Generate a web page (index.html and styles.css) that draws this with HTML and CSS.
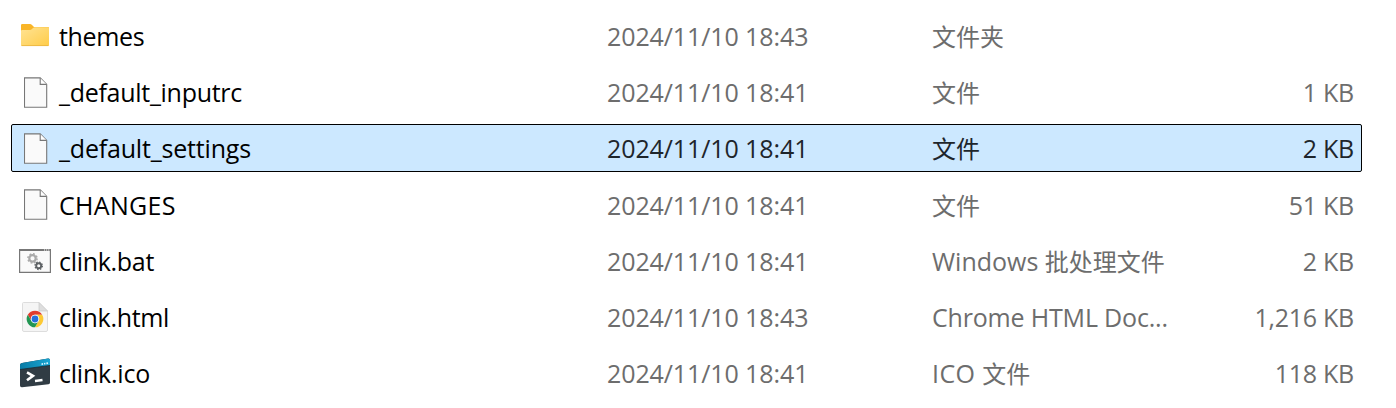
FILE: index.html
```html
<!DOCTYPE html>
<html lang="zh-CN">
<head>
<meta charset="utf-8">
<title>clink</title>
<link rel="stylesheet" href="styles.css">
</head>
<body>
<svg class="defs" width="0" height="0">
  <symbol id="file" viewBox="0 0 24 32">
    <path d="M.5 .9H16.2L22.7 7.4V30.2H.5Z" fill="#fafafa" stroke="#777" stroke-width="1.1"/>
    <path d="M16.2 .9V7.4H22.7" fill="#fff" stroke="#777" stroke-width="1.1"/>
  </symbol>
  <linearGradient id="folder" x1="0" y1="0" x2="1" y2="1"><stop offset="0" stop-color="#ffe394"/><stop offset="1" stop-color="#ffcc48"/></linearGradient>
  <linearGradient id="bar" x1="0" y1="0" x2="1" y2="0"><stop offset="0" stop-color="#087ba5"/><stop offset="1" stop-color="#1aa6d3"/></linearGradient>
</svg>
<main class="list">
  <div class="row">
    <div class="icon"><svg width="28" height="23" viewBox="0 0 28 23"><path d="M0 1.2Q0 0 1.2 0H9Q10 0 11 1L13 3H27Q28 3 28 4V12H0Z" fill="#f9b527"/><path d="M0 7Q0 6 1 6H9Q10 6 11 5L12 4Q13 3.2 14 3.2H27Q28 3.2 28 4.2V21Q28 22 27 22H1Q0 22 0 21Z" fill="url(#folder)"/><path d="M.5 21.6H27.5" fill="none" stroke="#e8b33e" stroke-width=".8"/></svg></div>
    <div class="name n-themes">themes</div><div class="date">2024/11/10 18:43</div><div class="type"><span class="cjk">文件夹</span></div><div class="size"></div>
  </div>
  <div class="row">
    <div class="icon icon-file"><svg width="24" height="32"><use href="#file"/></svg></div>
    <div class="name n-inputrc">_default_inputrc</div><div class="date">2024/11/10 18:41</div><div class="type"><span class="cjk">文件</span></div><div class="size">1 KB</div>
  </div>
  <div class="row selected">
    <div class="icon icon-file"><svg width="24" height="32"><use href="#file"/></svg></div>
    <div class="name n-settings">_default_settings</div><div class="date">2024/11/10 18:41</div><div class="type"><span class="cjk">文件</span></div><div class="size">2 KB</div>
  </div>
  <div class="row low">
    <div class="icon icon-file"><svg width="24" height="32"><use href="#file"/></svg></div>
    <div class="name n-changes">CHANGES</div><div class="date">2024/11/10 18:41</div><div class="type"><span class="cjk">文件</span></div><div class="size">51 KB</div>
  </div>
  <div class="row low">
    <div class="icon icon-bat"><svg width="32" height="24" viewBox="0 0 32 24"><path d="M.6 .6H31.4V23.4H.6Z" fill="#fafafa" stroke="#777" stroke-width="1.2"/><path d="M0 1H32" stroke="#777" stroke-width="2"/><path d="M25 1H30.5" stroke="#fff" stroke-width="1" stroke-dasharray="1.1 1"/><circle cx="13.5" cy="9.4" r="3.2" fill="none" stroke="#aaa" stroke-width="2.2"/><circle cx="13.5" cy="9.4" r="4.6" fill="none" stroke="#aaa" stroke-width="1.5" stroke-dasharray="1.8 1.81"/><circle cx="19.7" cy="16.8" r="2.5" fill="none" stroke="#5e6265" stroke-width="1.9"/><circle cx="19.7" cy="16.8" r="3.7" fill="none" stroke="#5e6265" stroke-width="1.3" stroke-dasharray="1.45 1.45"/></svg></div>
    <div class="name n-bat">clink.bat</div><div class="date">2024/11/10 18:41</div><div class="type t-bat">Windows <span class="cjk">批处理文件</span></div><div class="size">2 KB</div>
  </div>
  <div class="row">
    <div class="icon"><svg width="26" height="30" viewBox="0 0 26 30"><path d="M1.5 .5H17L25.5 9V28Q25.5 29.5 24 29.5H2Q.5 29.5 .5 28V1.5Q.5 .5 1.5 .5Z" fill="#f5f5f5" stroke="#ddd"/><path d="M17 .5V9H25.5Z" fill="#dedede" stroke="#c8c8c8" stroke-width=".7"/><g transform="translate(13 17)"><circle r="8.3" fill="#fff"/><path d="M-7.19-4.15A8.3 8.3 0 0 1 7.19-4.15L0-4.15A4.15 4.15 0 0 0-3.6 2.08Z" fill="#e33b2e"/><path d="M7.19-4.15A8.3 8.3 0 0 1 0 8.3L3.6 2.08A4.15 4.15 0 0 0 0-4.15Z" fill="#fcc934"/><path d="M0 8.3A8.3 8.3 0 0 1-7.19-4.15L-3.6 2.08A4.15 4.15 0 0 0 3.6 2.08Z" fill="#229653"/><circle r="4.2" fill="#fff"/><circle r="3.4" fill="#286fdb"/></g></svg></div>
    <div class="name n-html">clink.html</div><div class="date">2024/11/10 18:43</div><div class="type t-html">Chrome HTML Doc...</div><div class="size">1,216 KB</div>
  </div>
  <div class="row">
    <div class="icon"><svg width="30" height="30" viewBox="0 0 30 30"><path d="M2 5.1L28 .5Q30 .2 30 2V24.5Q30 26 28.5 26.3L2 29.3Q0 29.5 0 27.5V7Q0 5.4 2 5.1Z" fill="#303c44"/><path d="M2 5.1L28 .5Q30 .2 30 2V7.4L0 11.5V7Q0 5.4 2 5.1Z" fill="url(#bar)"/><path d="M0 11.5L30 7.4" stroke="#182229" stroke-width=".7"/><path d="M21.5 6.2L23 5.9M24 5.8L25.4 5.5M26.4 5.4L28 5.1" stroke="#d9f5ff" stroke-width="1.6"/><path d="M7 14.3L13 17.8L7 22.3" fill="none" stroke="#fff" stroke-width="2.6"/><path d="M15 22.9L22.5 22" stroke="#fff" stroke-width="2.5"/></svg></div>
    <div class="name n-ico">clink.ico</div><div class="date">2024/11/10 18:41</div><div class="type t-ico">ICO <span class="cjk">文件</span></div><div class="size">118 KB</div>
  </div>
</main>
</body>
</html>
```

FILE: styles.css
```css
body { margin: 0; background: #fff; overflow: hidden; }
.defs { display: block; }
.list {
  box-sizing: border-box;
  width: 1396px;
  height: 408px;
  padding: 11.6px 34px 0 11px;
  display: grid;
  grid-template-rows: repeat(7, 48px);
  row-gap: 8.2px;
  font: 25px/47px "Open Sans", "Noto Sans CJK SC", sans-serif;
  color: #6d6d6d;
}
.row {
  box-sizing: border-box;
  display: grid;
  grid-template-columns: 47px 548px 325px 250px 172px;
  border: 1px solid transparent;
  border-radius: 2px;
  height: 48px;
  line-height: 46.6px;
  white-space: nowrap;
}
.low { line-height: 48.6px; }
.selected { background: #cce8ff; border-color: #000; color: #1e252b; }
.icon { box-sizing: border-box; height: 46px; width: 46px; display: flex; align-items: center; justify-content: center; }
.icon svg { display: block; }
.icon-file { padding: 2px 0 0 2px; }
.icon-bat { padding-top: 1px; }
.name { color: #000; }
.n-themes { letter-spacing: -0.35px; }
.n-inputrc { letter-spacing: -0.28px; }
.n-settings { letter-spacing: -0.18px; }
.n-changes { letter-spacing: 0.3px; }
.n-bat { letter-spacing: -0.3px; }
.n-html { letter-spacing: -0.33px; }
.n-ico { letter-spacing: -0.22px; }
.date { letter-spacing: -0.1px; }
.t-html { letter-spacing: -0.18px; }
.t-ico { letter-spacing: 0.4px; }
.size { text-align: right; letter-spacing: -0.25px; }
.cjk { font-family: "Noto Sans CJK SC", sans-serif; font-size: 24px; line-height: 1; letter-spacing: 0; }
```
